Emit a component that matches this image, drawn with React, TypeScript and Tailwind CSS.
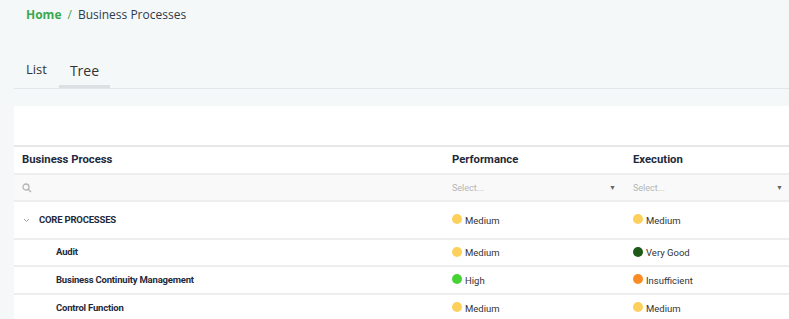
const rows = [
  { name: 'CORE PROCESSES', level: 0, h: 'h-[38px]', perf: ['Medium', '#fdd05b'], exec: ['Medium', '#fdd05b'] },
  { name: 'Audit', level: 1, h: 'h-[27px]', perf: ['Medium', '#fdd05b'], exec: ['Very Good', '#1d5a17'] },
  { name: 'Business Continuity Management', level: 1, h: 'h-[28px]', perf: ['High', '#46d334'], exec: ['Insufficient', '#fb8c25'] },
  { name: 'Control Function', level: 1, h: 'h-[28px]', perf: ['Medium', '#fdd05b'], exec: ['Medium', '#fdd05b'] },
]

function Status({ label, color }: { label: string; color: string }) {
  return (
    <div className="flex items-center pt-[2px]">
      <span className="w-[10px] h-[10px] rounded-full mr-[3px] -mt-[4px]" style={{ backgroundColor: color }} />
      <span className="text-[9.5px] text-[#333]">{label}</span>
    </div>
  )
}

export default function App() {
  return (
    <div className="w-[789px] h-[319px] overflow-hidden bg-[#f5f8f9] font-['Roboto',sans-serif]">
      <div className="pl-[26px] h-[30px] flex items-center text-[12px] font-['Open_Sans',sans-serif]">
        <span className="text-[#3aa84f] font-bold">Home</span>
        <span className="text-[#3aa84f] mx-[6px]">/</span>
        <span className="text-[#2f3a4b]">Business Processes</span>
      </div>
      <div className="ml-[14px] flex items-end border-b border-[#e3e6e8] h-[59px] font-['Open_Sans',sans-serif]">
        <div className="px-[12px] pb-[10px] text-[13px] leading-[18px] text-[#333]">List</div>
        <div className="px-[11px] pb-[5px] text-[14px] leading-[19px] text-[#333] border-b-[3px] border-[#dde0e3]">Tree</div>
      </div>
      <div className="mt-[17px] ml-[14px] bg-white">
        <div className="h-[39px]" />
        <div className="grid grid-cols-[430px_189px_1fr] border-t-2 border-[#e6e7e8] h-[28px] items-center text-[11.3px] font-bold text-[#1e2a3b]">
          <div className="pl-[8px]">Business Process</div>
          <div className="pl-[8px]">Performance</div>
          <div>Execution</div>
        </div>
        <div className="grid grid-cols-[430px_189px_1fr] h-[29px] items-center bg-[#f9f9f9] border-y-2 border-[#eeeeee]">
          <div className="pl-[8px]">
            <svg width="10" height="10" viewBox="0 0 10 10" fill="none" stroke="#b3b3b3" strokeWidth="1.3">
              <circle cx="4" cy="4" r="3" />
              <path d="M6.2 6.2 L9 9" />
            </svg>
          </div>
          <div className="pl-[8px] pr-[17px] pt-[2px] flex items-center justify-between text-[9px] text-[#b5b5b5]">
            <span>Select...</span>
            <span className="text-[#666] text-[7px]">▼</span>
          </div>
          <div className="pr-[6px] pt-[2px] flex items-center justify-between text-[9px] text-[#b5b5b5]">
            <span>Select...</span>
            <span className="text-[#666] text-[7px]">▼</span>
          </div>
        </div>
        {rows.map((r) => (
          <div
            key={r.name}
            className={`grid grid-cols-[430px_189px_1fr] items-center border-b-2 border-[#eeeeee] ${r.h}`}
          >
            <div className="flex items-center text-[9.5px] font-bold text-[#1e2a3b] tracking-[-0.2px]">
              {r.level === 0 ? (
                <>
                  <span className="ml-[9px] w-[16px]">
                    <svg width="7" height="5" viewBox="0 0 7 5" fill="none" stroke="#a0a0a0" strokeWidth="1">
                      <path d="M1 1 L3.5 3.5 L6 1" />
                    </svg>
                  </span>
                  <span>{r.name}</span>
                </>
              ) : (
                <span className="ml-[42px]">{r.name}</span>
              )}
            </div>
            <div className="pl-[8px]"><Status label={r.perf[0]} color={r.perf[1]} /></div>
            <div><Status label={r.exec[0]} color={r.exec[1]} /></div>
          </div>
        ))}
      </div>
    </div>
  )
}
